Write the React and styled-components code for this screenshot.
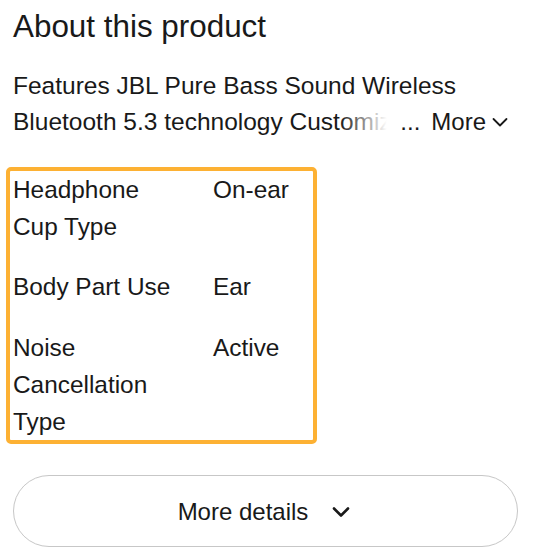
import React from "react";
import styled, { createGlobalStyle } from "styled-components";

const Global = createGlobalStyle`
  html, body { margin: 0; padding: 0; background: #fff; }
  body { font-family: "Liberation Sans", Arial, Helvetica, sans-serif; color: #191919; }
`;

const Page = styled.main`
  padding: 9px 20px 12px 13px;
  display: flex;
  flex-direction: column;
`;

const Heading = styled.h2`
  margin: 0;
  font-size: 31.4px;
  font-weight: 400;
  line-height: 36px;
  color: #191919;
`;

const Desc = styled.div`
  position: relative;
  margin-top: 23px;
  font-size: 24.5px;
  line-height: 36px;
  height: 72px;
  overflow: hidden;
`;

const MoreOverlay = styled.div`
  position: absolute;
  right: 0;
  bottom: 0;
  height: 36px;
  display: flex;
  align-items: center;
  font-size: 24px;
`;

const Fade = styled.span`
  width: 52px;
  height: 36px;
  background: linear-gradient(to right, rgba(255, 255, 255, 0), #fff 90%);
`;

const Dots = styled.span`
  background: #fff;
  padding-left: 8px;
  padding-right: 11px;
`;

const MoreLink = styled.button`
  display: flex;
  align-items: center;
  gap: 6px;
  height: 36px;
  border: 0;
  padding: 0 10px 0 0;
  background: #fff;
  font: inherit;
  color: #191919;
  cursor: pointer;
`;

const Specs = styled.dl`
  margin: 27px 0 0 -7px;
  width: 300px;
  padding: 0 0 0 3px;
  box-sizing: content-box;
  border: 4px solid #fdb133;
  border-radius: 5px;
  display: grid;
  grid-template-columns: 168px 1fr;
  column-gap: 32px;
  row-gap: 23px;
  font-size: 24.4px;
  line-height: 37.2px;
`;

const Label = styled.dt`
  margin: 0;
`;

const Value = styled.dd`
  margin: 0;
`;

const DetailsButton = styled.button`
  margin-top: 31px;
  height: 72px;
  width: 100%;
  border: 1px solid #c7c7c7;
  border-radius: 36px;
  background: #fff;
  display: flex;
  align-items: center;
  justify-content: center;
  gap: 21px;
  font-family: inherit;
  font-size: 24px;
  color: #191919;
  cursor: pointer;
  padding: 2px 0 0;
`;

const Chevron = ({ size = 16, stroke = 1.8 }) => (
  <svg width={size} height={size} viewBox="0 0 16 16" fill="none">
    <path d="M1.5 5 L8 11.5 L14.5 5" stroke="#191919" strokeWidth={stroke} strokeLinecap="round" strokeLinejoin="round" />
  </svg>
);

const BigChevron = () => (
  <svg width="24" height="24" viewBox="0 0 24 24" fill="none">
    <path d="M5 8.5 L12 15.5 L19 8.5" stroke="#191919" strokeWidth="2.6" strokeLinecap="round" strokeLinejoin="round" />
  </svg>
);

const specs = [
  ["Headphone Cup Type", "On-ear"],
  ["Body Part Use", "Ear"],
  ["Noise Cancellation Type", "Active"],
];

export default function App() {
  return (
    <>
      <Global />
      <Page>
        <Heading>About this product</Heading>
        <Desc>
          Features JBL Pure Bass Sound Wireless Bluetooth 5.3 technology Customizable sound with the JBL Headphones App
          <MoreOverlay>
            <Fade />
            <Dots>...</Dots>
            <MoreLink>
              More
              <Chevron />
            </MoreLink>
          </MoreOverlay>
        </Desc>
        <Specs>
          {specs.map(([k, v]) => (
            <React.Fragment key={k}>
              <Label>{k}</Label>
              <Value>{v}</Value>
            </React.Fragment>
          ))}
        </Specs>
        <DetailsButton>
          More details
          <BigChevron />
        </DetailsButton>
      </Page>
    </>
  );
}
